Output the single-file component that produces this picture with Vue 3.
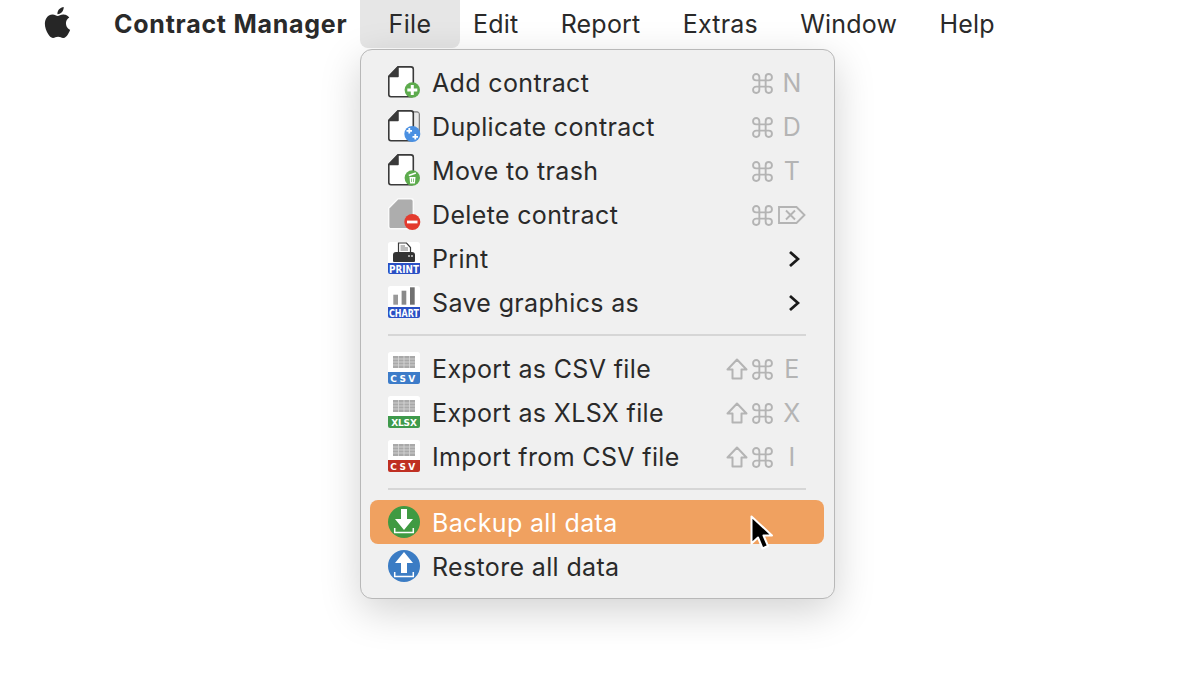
<script setup>
const menus = ['Edit', 'Report', 'Extras', 'Window', 'Help']
const groups = [
  [
    { label: 'Add contract', icon: 'add', keys: ['cmd', 'N'] },
    { label: 'Duplicate contract', icon: 'dup', keys: ['cmd', 'D'] },
    { label: 'Move to trash', icon: 'trash', keys: ['cmd', 'T'] },
    { label: 'Delete contract', icon: 'del', keys: ['cmd', 'bksp'] },
    { label: 'Print', icon: 'print', sub: true },
    { label: 'Save graphics as', icon: 'chart', sub: true }
  ],
  [
    { label: 'Export as CSV file', icon: 'csvb', keys: ['shift', 'cmd', 'E'] },
    { label: 'Export as XLSX file', icon: 'xlsx', keys: ['shift', 'cmd', 'X'] },
    { label: 'Import from CSV file', icon: 'csvr', keys: ['shift', 'cmd', 'I'] }
  ],
  [
    { label: 'Backup all data', icon: 'backup', active: true },
    { label: 'Restore all data', icon: 'restore' }
  ]
]
const sheets = {
  csvb: { band: '#3d7cc9', text: 'CSV', cls: 'wide' },
  xlsx: { band: '#3f9a4c', text: 'XLSX', cls: 'tight' },
  csvr: { band: '#bf2f22', text: 'CSV', cls: 'wide' }
}
const docIcons = ['add', 'dup', 'trash']
const cmdPath = 'M7 7H13V13H7ZM7 7V4A3 3 0 1 0 4 7H7M13 7H16A3 3 0 1 0 13 4V7M13 13V16A3 3 0 1 0 16 13H13M7 13H4A3 3 0 1 0 7 16V13'
</script>

<template>
  <div class="page">
    <header class="bar">
      <svg class="apple" viewBox="0 0 24 24" aria-hidden="true">
        <path fill="#262626" d="M12.152 6.896c-.948 0-2.415-1.078-3.96-1.04-2.04.027-3.91 1.183-4.961 3.014-2.117 3.675-.546 9.103 1.519 12.09 1.013 1.454 2.208 3.09 3.792 3.039 1.52-.065 2.09-.987 3.935-.987 1.831 0 2.35.987 3.96.948 1.637-.026 2.676-1.48 3.676-2.948 1.156-1.688 1.636-3.325 1.662-3.415-.039-.013-3.182-1.221-3.22-4.857-.026-3.04 2.48-4.494 2.597-4.559-1.429-2.09-3.623-2.324-4.39-2.376-2-.156-3.675 1.09-4.61 1.09zM15.53 3.83c.843-1.012 1.4-2.427 1.245-3.83-1.207.052-2.662.805-3.532 1.818-.78.896-1.454 2.338-1.273 3.714 1.338.104 2.715-.688 3.559-1.701"/>
      </svg>
      <span class="app">Contract Manager</span>
      <div class="file-wrap">
        <span class="menu-item file">File</span>
        <section class="menu">
          <template v-for="(group, gi) in groups" :key="gi">
            <hr v-if="gi" class="sep" />
            <div v-for="item in group" :key="item.label" class="row" :class="{ active: item.active }">
              <svg class="icon" viewBox="0 0 32 32" aria-hidden="true">
                <template v-if="docIcons.includes(item.icon)">
                  <path v-if="item.icon === 'dup'" d="M25 2H29A2.200 2.200 0 0 1 31.200 4.200V26" fill="#e8e8e8" stroke="#777" stroke-width="1.400"/>
                  <rect v-if="item.icon === 'dup'" x="25" y="2.700" width="5.500" height="24" fill="#e8e8e8"/>
                  <path d="M10 0.900H23A2.400 2.400 0 0 1 25.300 3.300V28.500A2.300 2.300 0 0 1 23 30.800H3A2.300 2.300 0 0 1 0.800 28.500V10.200Z" fill="#fff" stroke="#3a3a3a" stroke-width="1.600" stroke-linejoin="round"/>
                  <path d="M10 1L10 10.500H1Z" fill="#3a3a3a" stroke="#3a3a3a" stroke-width="1.500" stroke-linejoin="round"/>
                </template>
                <template v-if="item.icon === 'add'">
                  <circle cx="24.300" cy="24" r="7.700" fill="#5dab4d"/>
                  <path d="M24.300 19V29M19.300 24H29.300" stroke="#fff" stroke-width="3"/>
                </template>
                <template v-if="item.icon === 'dup'">
                  <circle cx="24.300" cy="24" r="8" fill="#4a90e2"/>
                  <path d="M21.300 18V23.500M18.500 20.800H24M27.300 24V29.500M24.500 26.800H30" stroke="#fff" stroke-width="1.800"/>
                </template>
                <template v-if="item.icon === 'trash'">
                  <circle cx="24.300" cy="24" r="7.700" fill="#5dab4d"/>
                  <path d="M21.500 23H27.500L26.900 29.500H22.100Z" fill="#fff"/>
                  <path d="M20.800 21.500L27.800 19" stroke="#fff" stroke-width="1.500"/>
                  <path d="M23.500 24.500V28M25.500 24.500V28" stroke="#5dab4d" stroke-width=".7"/>
                </template>
                <template v-if="item.icon === 'del'">
                  <path d="M10 0.800H23A2.400 2.400 0 0 1 25.300 3.200V28.500A2.300 2.300 0 0 1 23 30.800H3A2.300 2.300 0 0 1 0.700 28.500V10.200Z" fill="#adadad" stroke="#fafafa" stroke-width="1.400" stroke-linejoin="round"/>
                  <circle cx="24.300" cy="24" r="8" fill="#e33b2e"/>
                  <path d="M19 24H29.500" stroke="#fff" stroke-width="2.800"/>
                </template>
                <template v-if="item.icon === 'print'">
                  <rect width="32" height="32" rx="2.500" fill="#fff"/>
                  <path d="M0 21H32V30A2 2 0 0 1 30 32H2A2 2 0 0 1 0 30Z" fill="#2a50c4"/>
                  <path d="M10.500 1H18.500L22.500 5.500V11H10.500Z" fill="#fff" stroke="#3a3a3a" stroke-width="1.200"/>
                  <path d="M12.500 4H17M12.500 6H20M12.500 8H20" stroke="#777" stroke-width="1.100"/>
                  <path d="M8 10H24Q27 10 27 13V19Q27 20 26 20H6Q5 20 5 19V13Q5 10 8 10Z" fill="#333"/>
                  <circle cx="21" cy="14" r="1" fill="#ccc"/>
                  <circle cx="24" cy="14" r="1" fill="#ccc"/>
                  <text x="16" y="30.700" class="tag label-tag" text-anchor="middle" textLength="30" lengthAdjust="spacingAndGlyphs">PRINT</text>
                </template>
                <template v-if="item.icon === 'chart'">
                  <rect width="32" height="32" rx="2.500" fill="#fff"/>
                  <path d="M0 21H32V30A2 2 0 0 1 30 32H2A2 2 0 0 1 0 30Z" fill="#2a50c4"/>
                  <rect x="5.300" y="8.700" width="4.700" height="10" fill="#999"/>
                  <rect x="13.600" y="4.700" width="4.700" height="14" fill="#8a8a8a"/>
                  <rect x="22" y="1.300" width="4.700" height="17.400" fill="#707070"/>
                  <text x="16" y="30.700" class="tag label-tag" text-anchor="middle" textLength="30" lengthAdjust="spacingAndGlyphs">CHART</text>
                </template>
                <template v-if="sheets[item.icon]">
                  <rect width="32" height="32" rx="2.500" fill="#fff"/>
                  <path d="M0 20H32V30A2 2 0 0 1 30 32H2A2 2 0 0 1 0 30Z" :fill="sheets[item.icon].band"/>
                  <rect x="5" y="4" width="22" height="12" fill="#a9a9a9"/>
                  <path d="M5 7H27M5 10H27M5 13H27M10.500 4V16M16 4V16M21.500 4V16" stroke="#d8d8d8" stroke-width=".8"/>
                  <text x="16" y="29.600" class="tag" :class="sheets[item.icon].cls" text-anchor="middle">{{ sheets[item.icon].text }}</text>
                </template>
                <template v-if="item.icon === 'backup'">
                  <circle cx="16" cy="16" r="16" fill="#3f9a42"/>
                  <path d="M13 3H19V13H25L16 24L7 13H13Z" fill="#fff"/>
                  <path d="M6.700 22V26.500H25.300V22" fill="none" stroke="#fff" stroke-width="1.500"/>
                </template>
                <template v-if="item.icon === 'restore'">
                  <circle cx="16" cy="16" r="16" fill="#3b7cc4"/>
                  <path d="M13 23H19V13H25L16 2L7 13H13Z" fill="#fff"/>
                  <path d="M6.700 22V26.500H25.300V22" fill="none" stroke="#fff" stroke-width="1.500"/>
                </template>
              </svg>
              <span class="label">{{ item.label }}</span>
              <div v-if="item.keys" class="keys">
                <template v-for="k in item.keys" :key="k">
                  <svg v-if="k === 'shift'" class="shift" viewBox="0 0 22 22" aria-hidden="true">
                    <path d="M11 1.500L20.500 11.500H15.500V20.500H6.500V11.500H1.500Z" fill="none" stroke="#b4b4b4" stroke-width="2" stroke-linejoin="round"/>
                  </svg>
                  <svg v-else-if="k === 'cmd'" class="cmd" viewBox="0 0 20 20" aria-hidden="true">
                    <path :d="cmdPath" fill="none" stroke="#b4b4b4" stroke-width="1.800"/>
                  </svg>
                  <svg v-else-if="k === 'bksp'" class="bksp" viewBox="0 0 28 20" aria-hidden="true">
                    <path d="M1 2H18.500L26.500 10L18.500 18H1ZM8 5.500L17 14.500M17 5.500L8 14.500" fill="none" stroke="#b4b4b4" stroke-width="1.900"/>
                  </svg>
                  <span v-else class="letter">{{ k }}</span>
                </template>
              </div>
              <svg v-if="item.sub" class="chev" viewBox="0 0 12 18" aria-hidden="true">
                <path d="M2 2L10 9L2 16" fill="none" stroke="#1a1a1a" stroke-width="2.800"/>
              </svg>
              <svg v-if="item.active" class="cursor" viewBox="0 0 24 38" aria-hidden="true">
                <path d="M1.500 1.500V28.500L8 22.500L12.500 33.500L18 31L13.500 20.500H22Z" fill="#000" stroke="#fff" stroke-width="2" stroke-linejoin="round"/>
              </svg>
            </div>
          </template>
        </section>
      </div>
      <nav class="rest">
        <span v-for="m in menus" :key="m" class="menu-item">{{ m }}</span>
      </nav>
    </header>
  </div>
</template>

<style scoped>
.page {
  width: 1200px;
  height: 680px;
  background: #fff;
  overflow: hidden;
  font-family: Inter, "Liberation Sans", sans-serif;
  color: #2a2a2a;
  letter-spacing: 0.35px;
}
.bar {
  display: flex;
  align-items: center;
  height: 48px;
  padding-left: 44px;
  font-size: 25px;
}
.apple {
  width: 31px;
  height: 31px;
  margin-top: -4px;
  margin-left: -2px;
  flex: none;
}
.app {
  margin-left: 41px;
  width: 246px;
  font-weight: 700;
  letter-spacing: 0.75px;
  white-space: nowrap;
}
.file-wrap {
  position: relative;
  height: 48px;
}
.menu-item {
  display: flex;
  align-items: center;
  height: 48px;
}
.file {
  width: 100px;
  justify-content: center;
  background: #e6e6e6;
  border-radius: 0 0 8px 8px;
}
.rest {
  display: flex;
  gap: 42.3px;
  margin-left: 13px;
  letter-spacing: 0.2px;
}
.menu {
  position: absolute;
  left: 0;
  top: 49px;
  width: 475px;
  height: 550px;
  box-sizing: border-box;
  padding: 10px 10px 10px 9px;
  background: #f0f0f0;
  border: 1px solid #b8b8b8;
  border-radius: 12px;
  box-shadow: 0 12px 40px rgba(0, 0, 0, 0.18);
}
.sep {
  height: 2px;
  margin: 10px 18px 10px;
  border: 0;
  background: #d6d6d6;
}
.row {
  position: relative;
  display: flex;
  align-items: center;
  height: 44px;
  padding-left: 18px;
  border-radius: 8px;
}
.row.active {
  background: #f0a160;
  color: #fff;
}
.icon {
  width: 32px;
  height: 32px;
  margin-right: 12px;
  flex: none;
  overflow: visible;
}
.tag {
  font-family: "DejaVu Sans", sans-serif;
  font-weight: 700;
  font-size: 9px;
  fill: #fff;
  letter-spacing: 0;
}
.label-tag {
  font-size: 10.5px;
}
.wide {
  letter-spacing: 2.4px;
}
.tight {
  letter-spacing: -0.2px;
}
.label {
  flex: 1;
  padding-top: 2px;
  white-space: nowrap;
}
.keys {
  position: absolute;
  right: 18px;
  top: 1px;
  height: 44px;
  display: flex;
  align-items: center;
  color: #b4b4b4;
}
.letter {
  width: 28px;
  text-align: center;
}
.shift {
  width: 22px;
  height: 22px;
  margin-right: 4px;
}
.cmd {
  width: 21px;
  height: 21px;
  margin-right: 5px;
}
.bksp {
  width: 28px;
  height: 20px;
}
.chev {
  position: absolute;
  right: 24px;
  top: 14px;
  width: 12px;
  height: 18px;
}
.cursor {
  position: absolute;
  left: 380px;
  top: 15px;
  width: 24px;
  height: 38px;
  overflow: visible;
}
</style>
